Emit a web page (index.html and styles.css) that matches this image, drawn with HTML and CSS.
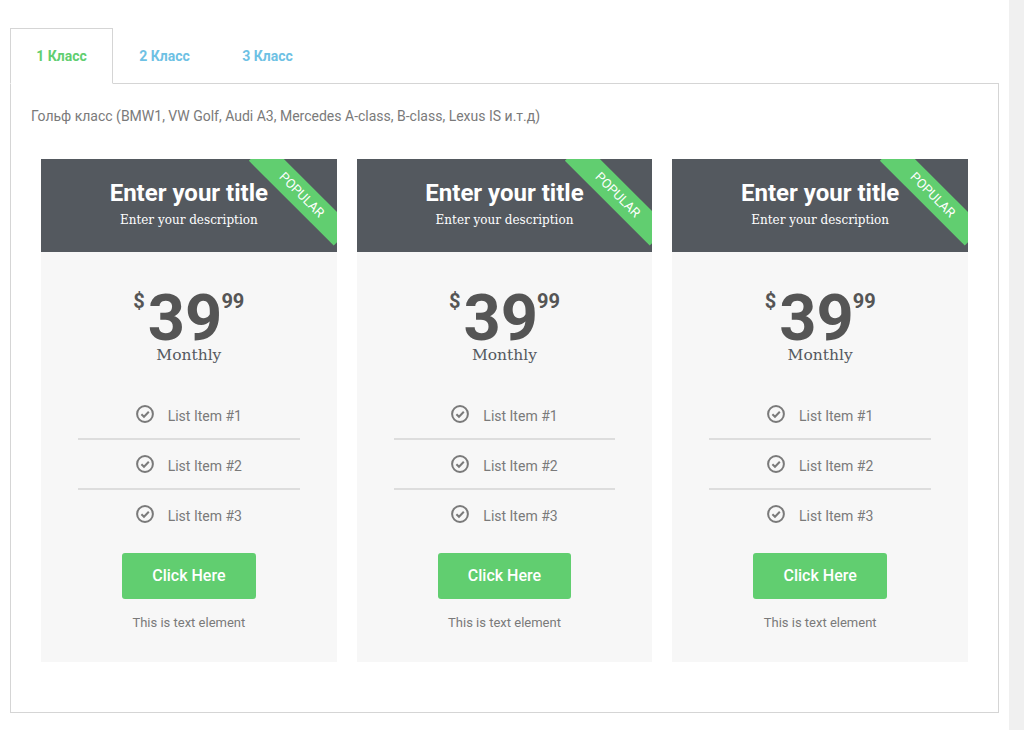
FILE: index.html
```html
<!DOCTYPE html>
<html lang="ru">
<head>
<meta charset="utf-8">
<title>Тарифы</title>
<link rel="stylesheet" href="styles.css">
</head>
<body>
<div class="page">
  <main class="content">
    <nav class="tabs">
      <a class="tab tab-active">1 Класс</a>
      <a class="tab">2 Класс</a>
      <a class="tab">3 Класс</a>
    </nav>
    <section class="panel">
      <p class="intro">Гольф класс (BMW1, VW Golf, Audi A3, Mercedes A-class, B-class, Lexus IS и.т.д)</p>
      <div class="cards">
        <article class="card">
          <header class="card-head">
            <div class="ribbon">POPULAR</div>
            <h2 class="title">Enter your title</h2>
            <p class="desc">Enter your description</p>
          </header>
          <div class="card-body">
            <div class="price"><span class="cur">$</span><span class="amount">39</span><span class="cents">99</span></div>
            <div class="period">Monthly</div>
            <ul class="items">
              <li class="item"><svg class="check" viewBox="0 0 18 18"><circle cx="9" cy="9" r="7.9"/><path d="M5.4 9.2l2.6 2.6 4.8-5"/></svg><span>List Item #1</span></li>
              <li class="item"><svg class="check" viewBox="0 0 18 18"><circle cx="9" cy="9" r="7.9"/><path d="M5.4 9.2l2.6 2.6 4.8-5"/></svg><span>List Item #2</span></li>
              <li class="item"><svg class="check" viewBox="0 0 18 18"><circle cx="9" cy="9" r="7.9"/><path d="M5.4 9.2l2.6 2.6 4.8-5"/></svg><span>List Item #3</span></li>
            </ul>
            <a class="btn">Click Here</a>
            <p class="note">This is text element</p>
          </div>
        </article>
        <article class="card">
          <header class="card-head">
            <div class="ribbon">POPULAR</div>
            <h2 class="title">Enter your title</h2>
            <p class="desc">Enter your description</p>
          </header>
          <div class="card-body">
            <div class="price"><span class="cur">$</span><span class="amount">39</span><span class="cents">99</span></div>
            <div class="period">Monthly</div>
            <ul class="items">
              <li class="item"><svg class="check" viewBox="0 0 18 18"><circle cx="9" cy="9" r="7.9"/><path d="M5.4 9.2l2.6 2.6 4.8-5"/></svg><span>List Item #1</span></li>
              <li class="item"><svg class="check" viewBox="0 0 18 18"><circle cx="9" cy="9" r="7.9"/><path d="M5.4 9.2l2.6 2.6 4.8-5"/></svg><span>List Item #2</span></li>
              <li class="item"><svg class="check" viewBox="0 0 18 18"><circle cx="9" cy="9" r="7.9"/><path d="M5.4 9.2l2.6 2.6 4.8-5"/></svg><span>List Item #3</span></li>
            </ul>
            <a class="btn">Click Here</a>
            <p class="note">This is text element</p>
          </div>
        </article>
        <article class="card">
          <header class="card-head">
            <div class="ribbon">POPULAR</div>
            <h2 class="title">Enter your title</h2>
            <p class="desc">Enter your description</p>
          </header>
          <div class="card-body">
            <div class="price"><span class="cur">$</span><span class="amount">39</span><span class="cents">99</span></div>
            <div class="period">Monthly</div>
            <ul class="items">
              <li class="item"><svg class="check" viewBox="0 0 18 18"><circle cx="9" cy="9" r="7.9"/><path d="M5.4 9.2l2.6 2.6 4.8-5"/></svg><span>List Item #1</span></li>
              <li class="item"><svg class="check" viewBox="0 0 18 18"><circle cx="9" cy="9" r="7.9"/><path d="M5.4 9.2l2.6 2.6 4.8-5"/></svg><span>List Item #2</span></li>
              <li class="item"><svg class="check" viewBox="0 0 18 18"><circle cx="9" cy="9" r="7.9"/><path d="M5.4 9.2l2.6 2.6 4.8-5"/></svg><span>List Item #3</span></li>
            </ul>
            <a class="btn">Click Here</a>
            <p class="note">This is text element</p>
          </div>
        </article>
      </div>
    </section>
  </main>
  <div class="scrollbar"></div>
</div>
</body>
</html>
```
FILE: styles.css
```css
* { box-sizing: border-box; }
html, body { margin: 0; height: 100%; }
body {
  background: #fff;
  font-family: Roboto, "Liberation Sans", sans-serif;
  color: #7a7a7a;
  overflow: hidden;
}
.page { display: flex; height: 730px; }
.content { flex: 1; min-width: 0; padding: 28px 10px 0 10px; }
.scrollbar { width: 15px; background: #f0f0f0; }

.tabs { display: flex; height: 56px; margin-bottom: -1px; position: relative; }
.tab {
  display: block;
  width: 103px;
  height: 56px;
  padding-top: 19px;
  text-align: center;
  font-size: 14px;
  line-height: 16px;
  font-weight: 700;
  color: #6ec1e4;
  border: 1px solid transparent;
}
.tab-active {
  color: #61ce70;
  background: #fff;
  border-color: #d5d5d5;
  border-bottom-color: #fff;
}

.panel {
  height: 630px;
  border: 1px solid #d5d5d5;
  padding: 20px 30px 0 20px;
}
.intro { margin: 0 0 31px; font-size: 14px; line-height: 24px; color: #7a7a7a; }
.cards { display: grid; grid-template-columns: repeat(3, 1fr); gap: 20px; margin-left: 10px; }
.card { background: #f7f7f7; height: 503px; }

.card-head {
  position: relative;
  overflow: hidden;
  height: 93px;
  background: #54595f;
  color: #fff;
  text-align: center;
  padding-top: 20px;
}
.ribbon {
  position: absolute;
  left: 201px;
  top: 22px;
  width: 120px;
  height: 26px;
  padding-left: 3px;
  line-height: 26px;
  background: #61ce70;
  color: #fff;
  font-size: 13px;
  text-align: center;
  transform: translateX(-1.5px) rotate(45deg);
}
.title { margin: 0; font-size: 24px; line-height: 28px; font-weight: 700; color: #fff; }
.desc { margin: 4px 0 0; font-family: "DejaVu Serif", serif; font-size: 12px; line-height: 18px; }

.card-body { display: flex; flex-direction: column; align-items: center; }
.price { display: flex; align-items: flex-start; margin-top: 39px; color: #555; height: 54px; }
.cur { font-size: 20px; line-height: 24px; font-weight: 700; margin-top: -2px; margin-right: 3px; }
.amount { font-size: 65px; line-height: 54px; font-weight: 700; margin-right: -1px; }
.cents { font-size: 20px; line-height: 24px; font-weight: 700; margin-top: -2px; }
.period { font-family: "DejaVu Serif", serif; font-size: 15.5px; line-height: 20px; color: #54595f; }

.items { list-style: none; margin: 25px 0 0; padding: 0; width: 75%; }
.item {
  display: flex;
  align-items: center;
  justify-content: center;
  gap: 14px;
  height: 50px;
  font-size: 14px;
  color: #7a7a7a;
  border-bottom: 2px solid #ddd;
}
.item:last-child { border-bottom-color: transparent; }
.item span { position: relative; top: 2px; }
.check { width: 18px; height: 18px; fill: none; stroke: #7a7a7a; stroke-width: 2; }

.btn {
  display: block;
  width: 133.6px;
  height: 46px;
  margin-top: 13px;
  line-height: 46px;
  text-align: center;
  background: #61ce70;
  border-radius: 3px;
  color: #fff;
  font-size: 16px;
  font-weight: 500;
}
.note { margin: 15px 0 0; font-size: 13px; line-height: 18px; color: #7a7a7a; }
```
